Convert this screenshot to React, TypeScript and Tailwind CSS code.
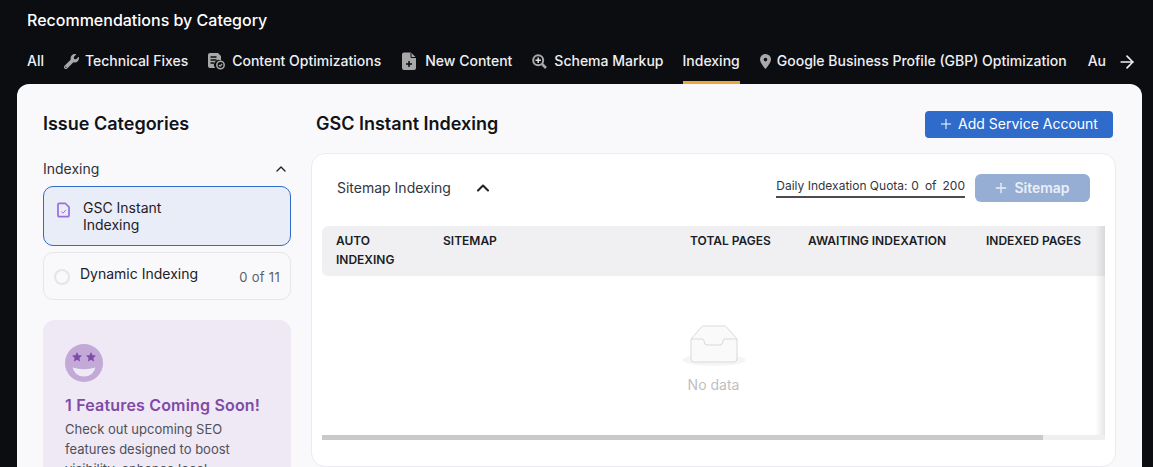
import { ArrowRight, ChevronUp, Plus } from "lucide-react";
import { FaWrench } from "react-icons/fa";

function ContentIcon() {
  return (
    <svg viewBox="0 0 17 18" className="h-[18px] w-[17px]" fill="none">
      <path d="M0 3a2 2 0 0 1 2-2h8l3 3v4.2A5 5 0 0 0 7.2 16H2a2 2 0 0 1-2-2z" fill="#a8a8a8" />
      <path d="M2.5 5h6M2.5 8h6M2.5 11h3.5" stroke="#0c0d11" strokeWidth="1.3" />
      <circle cx="12.5" cy="13" r="3.7" stroke="#a8a8a8" strokeWidth="1.5" />
      <path d="M10.9 13l1.2 1.2 2-2.2" stroke="#a8a8a8" strokeWidth="1.2" />
    </svg>
  );
}

function NewDocIcon() {
  return (
    <svg viewBox="0 0 16 18" className="ml-[1px] h-[18px] w-[16px]" fill="none">
      <path d="M2 0.5h7l5 5v10.5a2 2 0 0 1-2 2H2a2 2 0 0 1-2-2V2.500a2 2 0 0 1 2-2z" fill="#a8a8a8" />
      <path d="M9 0.5v5h5" stroke="#0c0d11" strokeWidth="1" />
      <path d="M7 9v6M4 12h6" stroke="#0c0d11" strokeWidth="1.5" />
    </svg>
  );
}

function SearchPlusIcon() {
  return (
    <svg viewBox="0 0 15 15" className="h-[15px] w-[15px]" fill="none">
      <circle cx="6.200" cy="6.200" r="5" stroke="#a8a8a8" strokeWidth="2" />
      <path d="M6.200 3.500v5.400M3.500 6.200h5.400" stroke="#e2e2e2" strokeWidth="1.500" />
      <path d="M10 10l4 4" stroke="#a8a8a8" strokeWidth="2.500" />
    </svg>
  );
}

function PinIcon() {
  return (
    <svg viewBox="0 0 11 15" className="mr-[-1px] h-[15px] w-[11px]">
      <path fillRule="evenodd" d="M5.500 0a5.500 5.500 0 0 1 5.500 5.500c0 3.500-5.500 9.500-5.500 9.500S0 9 0 5.500A5.500 5.500 0 0 1 5.500 0zm0 3.800a1.800 1.800 0 1 0 0 3.600 1.800 1.800 0 0 0 0-3.600z" fill="#a8a8a8" />
    </svg>
  );
}

function TabLabel({ icon, label, active, className = "" }: { icon?: React.ReactNode; label: string; active?: boolean; className?: string }) {
  return (
    <div className={`relative flex h-[46px] shrink-0 items-center gap-[7px] ${active ? "border-b-[3px] border-[#eda63a] pt-[3px]" : ""} ${className}`}>
      {icon}
      <span>{label}</span>
    </div>
  );
}

function EmptyBox() {
  return (
    <svg viewBox="0 0 64 43" className="h-[43px] w-[64px]" fill="none">
      <ellipse cx="32" cy="37" rx="31.500" ry="6" fill="#f5f5f5" />
      <path d="M9 16 L20 3.500 Q20.500 3 21.500 3 H42.500 Q43.500 3 44 3.500 L55 16 V36 Q55 39 52 39 H12 Q9 39 9 36 Z" fill="#fafafa" stroke="#d9d9d9" strokeWidth="1" />
      <path d="M9 16 H20 Q22 16 22 18 Q22 22 25 22 H38 Q41 22 41 18 Q41 16 43 16 H55" stroke="#d9d9d9" strokeWidth="1" />
    </svg>
  );
}

function StarFace() {
  return (
    <svg viewBox="0 0 38 38" className="h-[38px] w-[38px]">
      <circle cx="19" cy="19" r="19" fill="#c2a9d8" />
      <path d="M12 8l1.500 3.200 3.500.4-2.600 2.400.7 3.500-3.100-1.700-3.100 1.700.7-3.500L7 11.600l3.500-.4z" fill="#7f4aa8" />
      <path d="M26 8l1.500 3.200 3.500.4-2.600 2.400.7 3.500-3.100-1.700-3.100 1.700.7-3.500-2.600-2.400 3.500-.4z" fill="#7f4aa8" />
      <path d="M7.500 23.500Q19 27 30.500 23.500Q28 32.500 19 32.500Q10 32.500 7.500 23.500Z" fill="#efe8f5" />
    </svg>
  );
}

export default function App() {
  return (
    <div className="h-[467px] w-[1153px] overflow-hidden bg-[#0c0d11] font-['Inter',sans-serif] text-[#111318]">
      <div className="pl-[27px] pt-[11px] text-base font-medium leading-[19px] text-white">
        Recommendations by Category
      </div>

      <div className="flex h-[54px] items-start pl-[27px]">
        <div className="mt-[8px] flex w-[1079px] gap-[20px] overflow-hidden text-sm font-medium text-[#eef0f4]">
          <TabLabel label="All" />
          <TabLabel label="Technical Fixes" icon={<FaWrench className="mr-[-1px] h-[15px] w-[15px] text-[#a8a8a8]" />} />
          <TabLabel label="Content Optimizations" icon={<ContentIcon />} />
          <TabLabel label="New Content" icon={<NewDocIcon />} />
          <TabLabel label="Schema Markup" icon={<SearchPlusIcon />} />
          <TabLabel label="Indexing" active className="ml-[-1px]" />
          <TabLabel label="Google Business Profile (GBP) Optimization" icon={<PinIcon />} />
          <TabLabel label="Authority Building" className="ml-[1px]" />
        </div>
        <ArrowRight className="ml-[11px] mt-[22px] h-[20px] w-[20px] text-[#eef0f4]" strokeWidth={2} />
      </div>

      <div className="mx-[17px] mr-[11px] flex h-[383px] gap-[24px] overflow-hidden rounded-t-[12px] bg-[#f9f9fb] pl-[26px] pr-[27px] pt-[27px]">
        <aside className="mt-[1px] w-[248px] shrink-0">
          <h2 className="text-lg font-semibold leading-[24px]">Issue Categories</h2>
          <div className="mt-[21px] flex h-[24px] items-center justify-between text-sm text-[#2e3138]">
            <span>Indexing</span>
            <ChevronUp className="mr-[2px] h-[16px] w-[16px] text-[#222]" strokeWidth={2} />
          </div>
          <div className="mt-[5px] flex h-[60px] gap-[13px] rounded-[10px] border border-[#2f6bcb] bg-[#e9edf7] pl-[13px] pt-[12px]">
            <svg viewBox="0 0 13.500 16" className="mt-[3px] h-[16px] w-[13px]" fill="none" stroke="#9a6fdc" strokeWidth="1.800">
              <path d="M2.500 1h6L12.500 5v8.500a1.500 1.500 0 0 1-1.500 1.500H2.500A1.500 1.500 0 0 1 1 13.500v-11A1.500 1.500 0 0 1 2.500 1z" />
              <path d="M4.500 9.500l1.800 1.800 3-3.500" strokeWidth="1" />
            </svg>
            <div className="text-sm leading-[17px] text-[#1d2026]">GSC Instant<br />Indexing</div>
          </div>
          <div className="mt-[6px] flex h-[48px] items-center rounded-[10px] border border-[#e6e6e8] pl-[10px] pr-[10px]">
            <span className="mt-[1px] h-[16px] w-[16px] rounded-full border-2 border-[#e5e5e5]" />
            <span className="mb-[5px] ml-[10px] flex-1 text-sm text-[#1d2026]">Dynamic Indexing</span>
            <span className="mt-[3px] text-[13px] tracking-[0.3px] text-[#5c5f66]">0 of 11</span>
          </div>
          <div className="mt-[20px] h-[200px] rounded-[12px] bg-[#efe8f5] pl-[22px] pr-[20px] pt-[24px]">
            <StarFace />
            <div className="mt-[13px] text-base font-semibold leading-[20px] tracking-[0.18px] text-[#7f4aa8]">1 Features Coming Soon!</div>
            <p className="mt-[4px] text-[13px] leading-[20px] text-[#4e5158]">
              Check out upcoming SEO features designed to boost visibility, enhance local performance, and more.
            </p>
          </div>
        </aside>

        <main className="min-w-0 flex-1">
          <div className="ml-[-4px] flex h-[26px] items-center justify-between pl-[5px]">
            <h1 className="text-lg font-semibold">GSC Instant Indexing</h1>
            <button type="button" className="mr-[2px] flex h-[27px] w-[188px] items-center gap-[4px] rounded-[4px] bg-[#2f6bcb] pl-[13px] text-sm font-normal text-white">
              <Plus className="h-[16px] w-[16px]" strokeWidth={1.5} />
              Add Service Account
            </button>
          </div>
          <section className="ml-[-4px] mr-[-1px] mt-[16px] h-[314px] rounded-[14px] border border-[#ebebef] bg-white px-[10px] pt-[19px]">
            <div className="flex h-[29px] items-center pl-[15px] pr-[15px]">
              <span className="text-sm text-[#33363c]">Sitemap Indexing</span>
              <ChevronUp className="ml-[22px] h-[20px] w-[20px] text-[#222]" strokeWidth={2.5} />
              <div className="mb-[3px] ml-auto mr-[10px] flex h-[23px] items-start gap-[6px] whitespace-nowrap border-b-2 border-[#4b4b50] text-xs leading-[21px] text-[#33363c]">
                <span className="w-[129px]">Daily Indexation Quota:</span>
                <span>0</span>
                <span>of</span>
                <span>200</span>
              </div>
              <button type="button" className="flex h-[28px] w-[115px] items-center justify-center gap-[5px] rounded-[6px] bg-[#96aed4] pr-[2px] text-sm font-semibold text-[#eaeff7]">
                <Plus className="h-[16px] w-[16px]" strokeWidth={2} />
                Sitemap
              </button>
            </div>
            <div className="relative mt-[24px] h-[214px] w-[783px]">
              <div className="grid h-[50px] grid-cols-[107px_247px_118px_178px_1fr] rounded-l-[6px] bg-[#f0f0f3] pl-[14px] pt-[5px] text-xs font-semibold leading-[19px] text-[#1a1d23]">
                <div>AUTO<br />INDEXING</div>
                <div>SITEMAP</div>
                <div>TOTAL PAGES</div>
                <div>AWAITING INDEXATION</div>
                <div>INDEXED PAGES</div>
              </div>
              <div className="flex flex-col items-center pt-[47px]">
                <EmptyBox />
                <span className="mt-[9px] text-sm text-[#bfbfbf]">No data</span>
              </div>
              <div className="absolute inset-y-0 right-0 w-[10px] bg-gradient-to-l from-black/10 to-transparent" />
              <div className="absolute bottom-0 left-0 h-[5px] w-full bg-[#efefef]">
                <div className="h-full w-[721px] bg-[#c9c9c9]" />
              </div>
            </div>
          </section>
        </main>
      </div>
    </div>
  );
}
